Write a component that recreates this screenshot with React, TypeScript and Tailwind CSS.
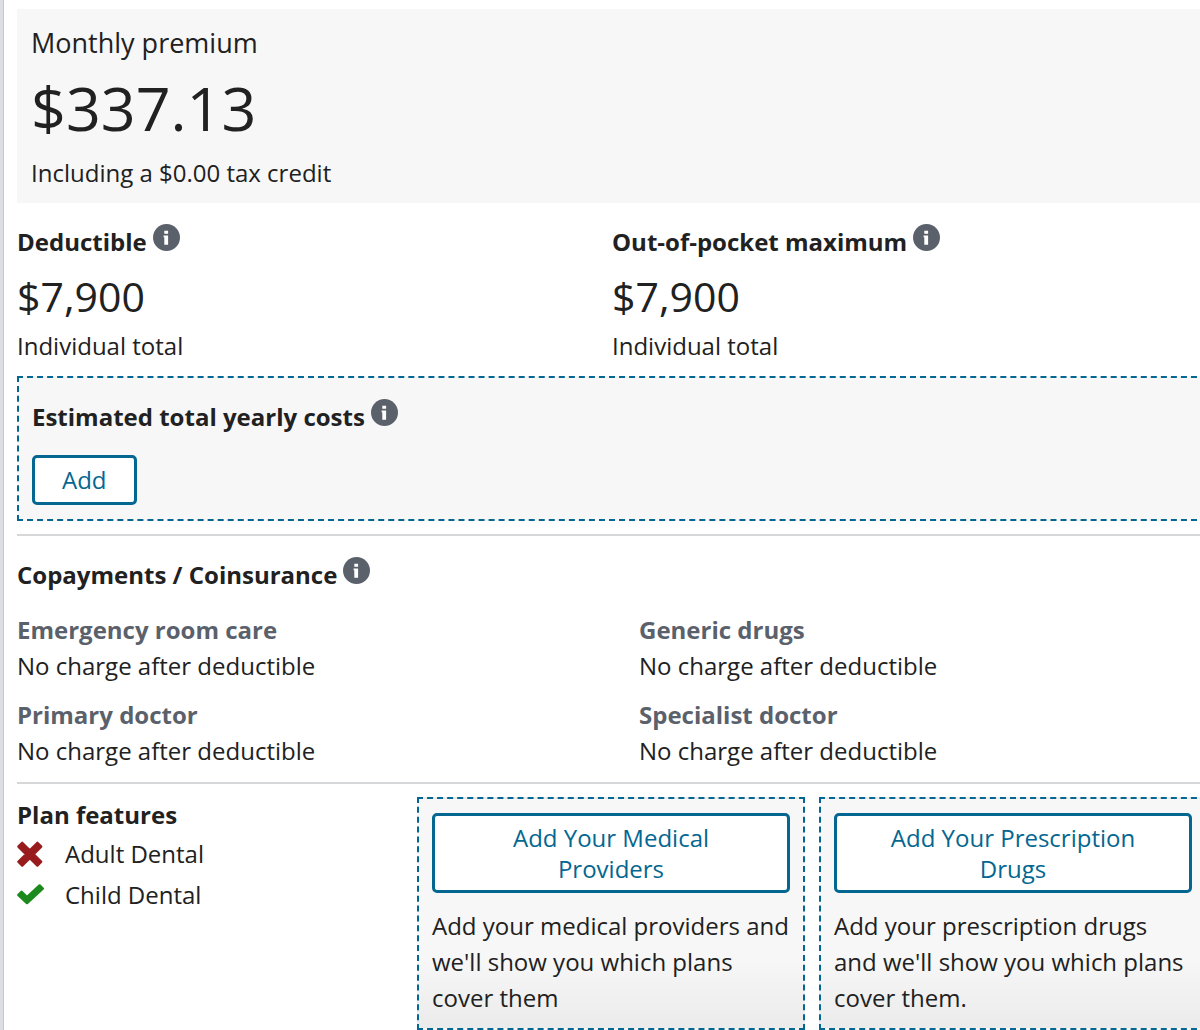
import type { ReactNode } from "react";

function Info({ label }: { label: string }) {
  return (
    <button type="button" aria-label={label} className="ml-[6px] shrink-0">
      <svg viewBox="0 0 27 27" className="size-[27px]" aria-hidden="true">
        <circle cx="13.5" cy="13.5" r="13.5" fill="#5b616b" />
        <path fill="#fff" d="M11.3 6.8h3.8v3h-3.8zM10.6 11.6h4.5v9.2h-3.8v-7.6h-.7z" />
      </svg>
    </button>
  );
}

function Heading({ children, info }: { children: string; info: string }) {
  return (
    <div className="flex items-start">
      <h2 className="pt-[2px] text-2xl leading-8 font-bold">{children}</h2>
      <Info label={info} />
    </div>
  );
}

function Total({ title }: { title: string }) {
  return (
    <div>
      <Heading info={"About " + title}>{title}</Heading>
      <p className="mt-[14px] text-[41px] leading-12">$7,900</p>
      <p className="mt-[10px] text-2xl leading-8">Individual total</p>
    </div>
  );
}

function Copay({ title }: { title: string }) {
  return (
    <div>
      <h3 className="text-2xl leading-9 font-bold text-[#5b616b]">{title}</h3>
      <p className="text-2xl leading-9">No charge after deductible</p>
    </div>
  );
}

function AddPanel({ button, children }: { button: string; children: ReactNode }) {
  return (
    <div className="min-w-0 flex-1 border-2 border-dashed border-[#046791] bg-linear-to-b from-[#f7f7f7] from-70% to-[#ebebeb] px-[13px] pt-[14px] pb-3">
      <button type="button" className="block w-full rounded-[5px] border-3 border-[#046791] bg-white px-12 py-[6px] text-2xl leading-[31px] text-[#046791]">
        {button}
      </button>
      <p className="mt-[15px] text-2xl leading-9">{children}</p>
    </div>
  );
}

export default function App() {
  return (
    <div className="border-l-3 border-[#dcdee1]">
      <main className="flow-root overflow-x-hidden border-l border-[#c3c6ca] bg-white pl-[13px] font-['Open_Sans',sans-serif] text-[#212121]">
        <div className="-mr-[7px]">
          <section className="mt-[9px] bg-[#f7f7f7] px-[14px] pt-4 pb-3">
            <h1 className="text-[27px] leading-9">Monthly premium</h1>
            <p className="mt-[11px] text-[61px] leading-[72px]">$337.13</p>
            <p className="mt-[11px] text-2xl leading-9">Including a $0.00 tax credit</p>
          </section>
          <section className="mt-[21px] grid grid-cols-2">
            <Total title="Deductible" />
            <Total title="Out-of-pocket maximum" />
          </section>
          <section className="mt-[14px] border-2 border-dashed border-[#046791] bg-[#f7f7f7] px-[13px] pt-[21px] pb-[14px]">
            <Heading info="About yearly costs">Estimated total yearly costs</Heading>
            <button type="button" className="mt-[22px] block rounded-[5px] border-3 border-[#046791] bg-white px-[27px] py-[6px] text-2xl leading-8 text-[#046791]">
              Add
            </button>
          </section>
          <section className="mt-[13px] border-t-2 border-[#d6d7d9] pt-[21px]">
            <Heading info="About copayments and coinsurance">Copayments / Coinsurance</Heading>
            <div className="mt-[21px] grid grid-cols-2 gap-x-[54px] gap-y-[13px]">
              <Copay title="Emergency room care" />
              <Copay title="Generic drugs" />
              <Copay title="Primary doctor" />
              <Copay title="Specialist doctor" />
            </div>
          </section>
          <section className="mt-[13px] flex border-t-2 border-[#d6d7d9] pt-[13px]">
            <div className="w-[400px] shrink-0">
              <h2 className="text-2xl leading-9 font-bold">Plan features</h2>
              <ul className="text-2xl leading-[41px]">
                <li className="flex items-center gap-5">
                  <svg viewBox="0 0 28 28" className="size-7" aria-hidden="true">
                    <path
                      d="M5.2 3.2L12.8 10.8L20.4 3.2L23.8 6.6L16.2 14.2L23.8 21.8L20.4 25.2L12.8 17.6L5.2 25.2L1.8 21.8L9.4 14.2L1.8 6.6Z"
                      fill="#981b1e"
                      stroke="#981b1e"
                      strokeWidth="3"
                      strokeLinejoin="round"
                    />
                  </svg>
                  Adult Dental
                </li>
                <li className="flex items-center gap-5">
                  <svg viewBox="0 0 28 28" className="size-7" aria-hidden="true">
                    <path
                      d="M1.5 14L4.6 10.9L10 16.2L22.6 4.5L25.7 7.6L10 22Z"
                      fill="#1d8a1d"
                      stroke="#1d8a1d"
                      strokeWidth="2.6"
                      strokeLinejoin="round"
                    />
                  </svg>
                  Child Dental
                </li>
              </ul>
            </div>
            <div className="flex min-w-0 flex-1 gap-[14px]">
              <AddPanel button="Add Your Medical Providers">
                Add your medical providers and we'll show you which plans cover them
              </AddPanel>
              <AddPanel button="Add Your Prescription Drugs">
                Add your prescription drugs and we'll show you which plans cover them.
              </AddPanel>
            </div>
          </section>
        </div>
      </main>
    </div>
  );
}
